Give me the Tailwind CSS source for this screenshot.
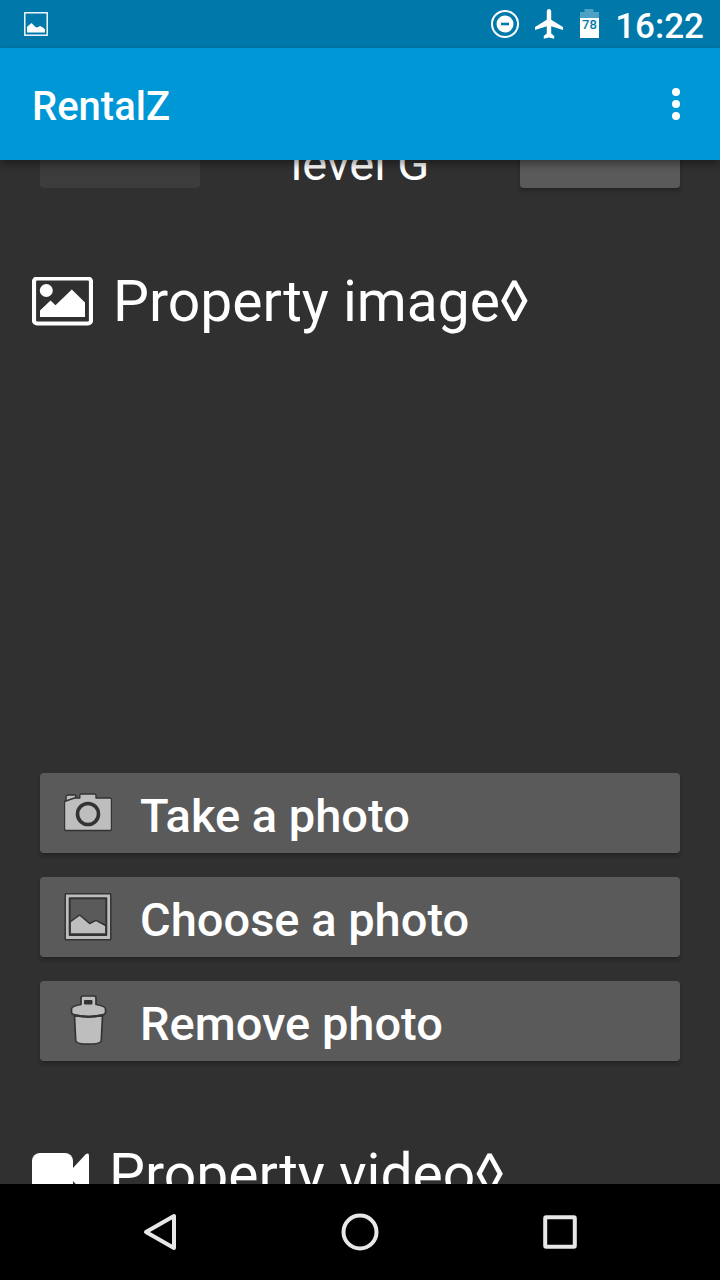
<!DOCTYPE html>
<html lang="en">
<head>
<meta charset="utf-8">
<meta name="viewport" content="width=device-width, initial-scale=1">
<title>RentalZ</title>
<script src="https://cdn.jsdelivr.net/npm/@tailwindcss/browser@4"></script>
</head>
<body class="flex h-screen flex-col overflow-hidden bg-[#303030] font-[Roboto,sans-serif] text-white">
  <div class="flex h-12 shrink-0 items-center bg-[#0079aa] pl-6 pr-4">
    <svg class="h-6 w-6" viewBox="0 0 24 24" fill="none" aria-hidden="true">
      <rect x="0.8" y="0.8" width="22.4" height="22.4" stroke="#fff" stroke-width="1.4"/>
      <path d="M3 20.500V15l1.500-1.500L7.500 11l4 4 1.500 .4 3-1.400 3 1.500 2 2v3z" fill="#fff"/>
    </svg>
    <div class="ml-auto flex items-center">
      <svg class="h-7 w-7" viewBox="0 0 28 28" aria-hidden="true">
        <circle cx="14" cy="14" r="13" fill="none" stroke="#fff" stroke-width="2"/>
        <circle cx="14" cy="14" r="8.500" fill="#fff"/>
        <path d="M10 14h8" stroke="#0079aa" stroke-width="2.600"/>
      </svg>
      <svg class="ml-4 h-8 w-7" viewBox="0 0 28 32" fill="#fff" aria-hidden="true">
        <path d="M14 1c-1.300 0-2.200 1-2.200 2.300v8.500L0 19v3l11.800-3.700v7.200L8.800 28v2.800L14 29.500l5.200 1.300V28l-3-2.500v-7.200L28 22v-3l-11.800-7.200V3.300C16.200 2 15.300 1 14 1z"/>
      </svg>
      <svg class="ml-4 h-8 w-5" viewBox="0 0 20 32" role="img" aria-label="Battery 78 percent">
        <path d="M5.500 1h9v3H20v6H1V4h4.500z" fill="#4da1c4"/>
        <path d="M1 10h19v20H1z" fill="#fff"/>
        <text x="10.500" y="21" text-anchor="middle" font-family="Roboto" font-size="13" font-weight="500" fill="#0079aa">78</text>
      </svg>
      <span class="ml-4 pt-1.5 text-[35px]/10 font-medium">16:22</span>
    </div>
  </div>

  <header class="z-10 flex h-28 shrink-0 items-center justify-between bg-[#0097d6] pl-8 shadow-[0_4px_8px_rgba(0,0,0,0.4)]">
    <h1 class="pt-1.5 text-[40px]/12 font-medium">RentalZ</h1>
    <button type="button" aria-label="More options" class="flex h-20 w-22 items-center justify-center">
      <svg class="h-8 w-2" viewBox="0 0 8 32" fill="#fff" aria-hidden="true">
        <circle cx="4" cy="4" r="4"/><circle cx="4" cy="16" r="4"/><circle cx="4" cy="28" r="4"/>
      </svg>
    </button>
  </header>

  <main class="min-h-0 flex-1 overflow-hidden">
    <div class="-mt-13 flex h-20 items-end justify-between px-10">
      <button type="button" disabled aria-label="Previous level" class="h-20 w-40 rounded bg-[#3c3c3c]"></button>
      <p class="text-[47px]/12">level G</p>
      <button type="button" aria-label="Next level" class="h-20 w-40 rounded bg-[#5a5a5b] shadow-[0_3px_4px_rgba(0,0,0,0.25)]"></button>
    </div>

    <section class="mt-[82px]">
      <h2 class="flex items-center gap-5 px-8 text-[57px]/16">
        <svg class="h-[50px] w-[61px] shrink-0" viewBox="0 1 61 50" aria-hidden="true">
          <rect x="2" y="2.500" width="57" height="45" rx="3" fill="none" stroke="#fff" stroke-width="4.200"/>
          <circle cx="14.300" cy="14.500" r="6.500" fill="#fff"/>
          <path d="M8 41v-6.500L18.500 24.500l5 4.800L39.800 13.500 53 26.500V41z" fill="#fff"/>
        </svg>
        Property image◊
      </h2>
      <div class="mt-[439px] flex flex-col gap-6 px-10">
        <button type="button" class="flex h-20 items-center gap-7 rounded bg-[#5a5a5b] px-6 text-[47px]/14 font-medium shadow-[0_3px_4px_rgba(0,0,0,0.25)]">
          <svg class="h-12 w-12 shrink-0" viewBox="0 -4 48 48" fill="#bebebe" stroke="#333" stroke-width="1.400" stroke-linejoin="round" aria-hidden="true">
            <path d="M2 8.500v-5l1.500-1.500h8L12 3.500 10.500 6z"/>
            <path d="M1.500 37.500l-1-1V8.500L10.500 5h5.300V2l1-1H31l1 1v3h14.500l1 1v30.500l-1 1z"/>
            <circle cx="24" cy="21" r="10.500" stroke-width="3.600"/>
          </svg>
          <span class="pt-1.5">Take a photo</span>
        </button>
        <button type="button" class="flex h-20 items-center gap-7 rounded bg-[#5a5a5b] px-6 text-[47px]/14 font-medium shadow-[0_3px_4px_rgba(0,0,0,0.25)]">
          <svg class="h-12 w-12 shrink-0" viewBox="0 0 48 48" fill="none" stroke="#333" stroke-width="1.500" stroke-linejoin="round" aria-hidden="true">
            <rect x="1.200" y="0.700" width="45.600" height="46" rx="1" fill="#bebebe"/>
            <rect x="5.700" y="5.300" width="36.600" height="36.800" fill="#5a5a5b" stroke-width="2"/>
            <path d="M7 28.500L15.500 22l10 9 6.500-3.500 9 5.500v7H7z" fill="#bebebe" stroke="none"/>
            <path d="M6 28.800L15.700 22l10 8.500 6.300-3.200 10 5.200"/>
          </svg>
          <span class="pt-1.5">Choose a photo</span>
        </button>
        <button type="button" class="flex h-20 items-center gap-7 rounded bg-[#5a5a5b] px-6 text-[47px]/14 font-medium shadow-[0_3px_4px_rgba(0,0,0,0.25)]">
          <svg class="h-12 w-12 shrink-0 overflow-visible" viewBox="0 0 48 48" fill="#bebebe" stroke="#333" stroke-width="1.700" stroke-linejoin="round" aria-hidden="true">
            <path d="M10.500 19l1.200 24.500c.2 2.500 4.300 3.700 12.800 3.700s12.600-1.200 12.800-3.700L38.500 19z"/>
            <path d="M17 7.500V1q0-2 2-2H30q2 0 2 2v6.500c6 1 9.500 2.500 9.500 4.500v3.500c0 2.500-7 4-17 4s-17-1.500-17-4V12c0-2 3.500-3.500 9.500-4.500z"/>
            <path d="M11 18.300q13.500 3 27 0" fill="none" stroke-width="2.200"/>
            <rect x="20.500" y="3.500" width="7.500" height="3.500" fill="#333" stroke-width="1"/>
          </svg>
          <span class="pt-1.5">Remove photo</span>
        </button>
      </div>
    </section>

    <section class="mt-[82px]">
      <h2 class="flex items-center gap-5 px-8 text-[57px]/16">
        <svg class="h-11 w-[57px] shrink-0" viewBox="0 0 57 44" fill="#fff" aria-hidden="true">
          <rect y="0" width="41" height="43" rx="8"/>
          <path d="M41 15L53.500 1.500Q57-1 57 3v37q0 4-3.500 1.500L41 28z"/>
        </svg>
        Property video◊
      </h2>
    </section>
  </main>

  <nav aria-label="System navigation" class="z-10 flex h-24 shrink-0 items-center justify-center gap-[120px] bg-black">
    <button type="button" aria-label="Back" class="flex h-20 w-20 items-center justify-center">
      <svg class="h-10 w-10" viewBox="0 0 40 40" fill="none" stroke="#e8e8e8" stroke-width="4" stroke-linejoin="round" aria-hidden="true"><path d="M34 4v32L6 20z"/></svg>
    </button>
    <button type="button" aria-label="Home" class="flex h-20 w-20 items-center justify-center">
      <svg class="h-10 w-10" viewBox="0 0 40 40" fill="none" stroke="#e8e8e8" stroke-width="4" aria-hidden="true"><circle cx="20" cy="20" r="16.500"/></svg>
    </button>
    <button type="button" aria-label="Recent apps" class="flex h-20 w-20 items-center justify-center">
      <svg class="h-10 w-10" viewBox="0 0 40 40" fill="none" stroke="#e8e8e8" stroke-width="4" aria-hidden="true"><rect x="5.200" y="5.200" width="29.600" height="29.600" rx="1"/></svg>
    </button>
  </nav>
</body>
</html>
